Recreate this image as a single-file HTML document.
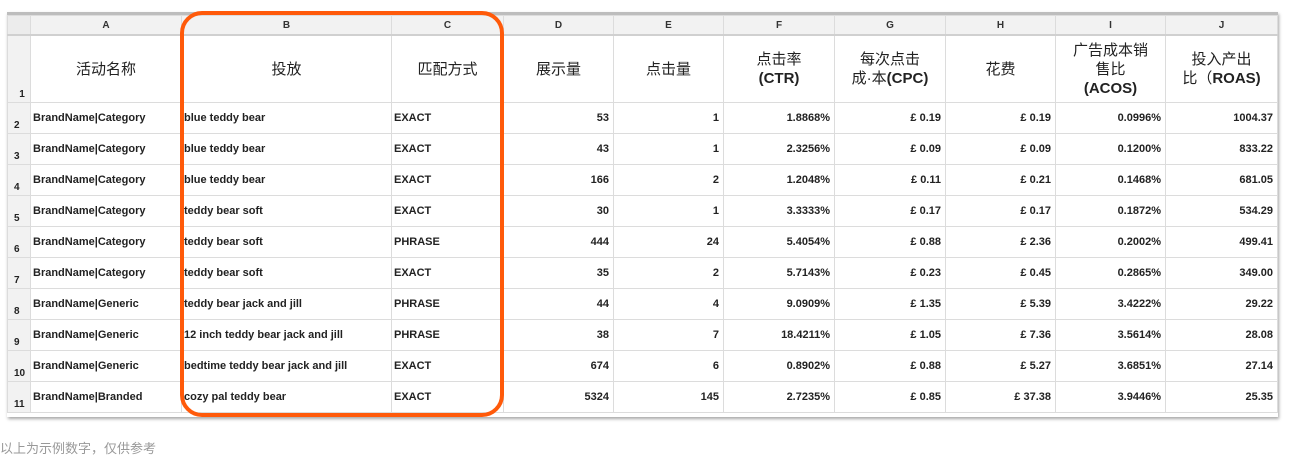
<!DOCTYPE html>
<html><head><meta charset="utf-8"><style>
body{margin:0;width:1293px;height:462px;background:#fff;position:relative;overflow:hidden;font-family:"Liberation Sans","Noto Sans CJK SC",sans-serif;}
.frame{position:absolute;left:7px;top:12px;width:1271px;height:402px;border-top:3px solid #bdbdbd;box-shadow:1px 2px 3px rgba(0,0,0,.35);background:#fff;}
table{position:absolute;left:7px;top:15px;border-collapse:collapse;table-layout:fixed;}
td{border:1px solid #dcdcdc;padding:0 2px;font-size:11px;font-weight:bold;color:#222;white-space:nowrap;overflow:hidden;height:30px;line-height:13px;}
tr.hd td{height:18px;background:#f2f2f2;text-align:center;font-size:10px;color:#333;border-bottom:2px solid #d0d0d0;}
td.rn{background:#f2f2f2;text-align:left;vertical-align:bottom;font-size:10px;padding:0 0 0 6px;color:#222;line-height:14px;}
tr.h1 td{height:66px;text-align:center;font-size:15px;font-weight:normal;color:#222;line-height:19px;}
tr.h1 td.rn{font-size:10px;font-weight:bold;line-height:14px;}
td.r{text-align:right;padding-right:4px;}
.oval{position:absolute;left:180px;top:11px;width:316px;height:398px;border:4px solid #ff5a0a;border-radius:22px;}
.note{position:absolute;left:0;top:438px;font-size:13px;color:#999;}
</style></head><body>
<div class="frame"></div>
<table>
<colgroup><col style="width:23px"><col style="width:151px"><col style="width:210px"><col style="width:112px"><col style="width:110px"><col style="width:110px"><col style="width:111px"><col style="width:111px"><col style="width:110px"><col style="width:110px"><col style="width:112px"></colgroup>
<tr class="hd"><td class="rn" style="background:#ececec"></td><td>A</td><td>B</td><td>C</td><td>D</td><td>E</td><td>F</td><td>G</td><td>H</td><td>I</td><td>J</td></tr>
<tr class="h1"><td class="rn">1</td><td>活动名称</td><td>投放</td><td>匹配方式</td><td>展示量</td><td>点击量</td><td>点击率<br><b>(CTR)</b></td><td>每次点击<br>成·本<b>(CPC)</b></td><td>花费</td><td>广告成本销<br>售比<br><b>(ACOS)</b></td><td>投入产出<br>比（<b>ROAS)</b></td></tr>
<tr><td class="rn">2</td><td>BrandName|Category</td><td>blue teddy bear</td><td>EXACT</td><td class="r">53</td><td class="r">1</td><td class="r">1.8868%</td><td class="r">£ 0.19</td><td class="r">£ 0.19</td><td class="r">0.0996%</td><td class="r">1004.37</td></tr>
<tr><td class="rn">3</td><td>BrandName|Category</td><td>blue teddy bear</td><td>EXACT</td><td class="r">43</td><td class="r">1</td><td class="r">2.3256%</td><td class="r">£ 0.09</td><td class="r">£ 0.09</td><td class="r">0.1200%</td><td class="r">833.22</td></tr>
<tr><td class="rn">4</td><td>BrandName|Category</td><td>blue teddy bear</td><td>EXACT</td><td class="r">166</td><td class="r">2</td><td class="r">1.2048%</td><td class="r">£ 0.11</td><td class="r">£ 0.21</td><td class="r">0.1468%</td><td class="r">681.05</td></tr>
<tr><td class="rn">5</td><td>BrandName|Category</td><td>teddy bear soft</td><td>EXACT</td><td class="r">30</td><td class="r">1</td><td class="r">3.3333%</td><td class="r">£ 0.17</td><td class="r">£ 0.17</td><td class="r">0.1872%</td><td class="r">534.29</td></tr>
<tr><td class="rn">6</td><td>BrandName|Category</td><td>teddy bear soft</td><td>PHRASE</td><td class="r">444</td><td class="r">24</td><td class="r">5.4054%</td><td class="r">£ 0.88</td><td class="r">£ 2.36</td><td class="r">0.2002%</td><td class="r">499.41</td></tr>
<tr><td class="rn">7</td><td>BrandName|Category</td><td>teddy bear soft</td><td>EXACT</td><td class="r">35</td><td class="r">2</td><td class="r">5.7143%</td><td class="r">£ 0.23</td><td class="r">£ 0.45</td><td class="r">0.2865%</td><td class="r">349.00</td></tr>
<tr><td class="rn">8</td><td>BrandName|Generic</td><td>teddy bear jack and jill</td><td>PHRASE</td><td class="r">44</td><td class="r">4</td><td class="r">9.0909%</td><td class="r">£ 1.35</td><td class="r">£ 5.39</td><td class="r">3.4222%</td><td class="r">29.22</td></tr>
<tr><td class="rn">9</td><td>BrandName|Generic</td><td>12 inch teddy bear jack and jill</td><td>PHRASE</td><td class="r">38</td><td class="r">7</td><td class="r">18.4211%</td><td class="r">£ 1.05</td><td class="r">£ 7.36</td><td class="r">3.5614%</td><td class="r">28.08</td></tr>
<tr><td class="rn">10</td><td>BrandName|Generic</td><td>bedtime teddy bear jack and jill</td><td>EXACT</td><td class="r">674</td><td class="r">6</td><td class="r">0.8902%</td><td class="r">£ 0.88</td><td class="r">£ 5.27</td><td class="r">3.6851%</td><td class="r">27.14</td></tr>
<tr><td class="rn">11</td><td>BrandName|Branded</td><td>cozy pal teddy bear</td><td>EXACT</td><td class="r">5324</td><td class="r">145</td><td class="r">2.7235%</td><td class="r">£ 0.85</td><td class="r">£ 37.38</td><td class="r">3.9446%</td><td class="r">25.35</td></tr>
</table>
<div class="oval"></div>
<div class="note">以上为示例数字，仅供参考</div>
</body></html>
